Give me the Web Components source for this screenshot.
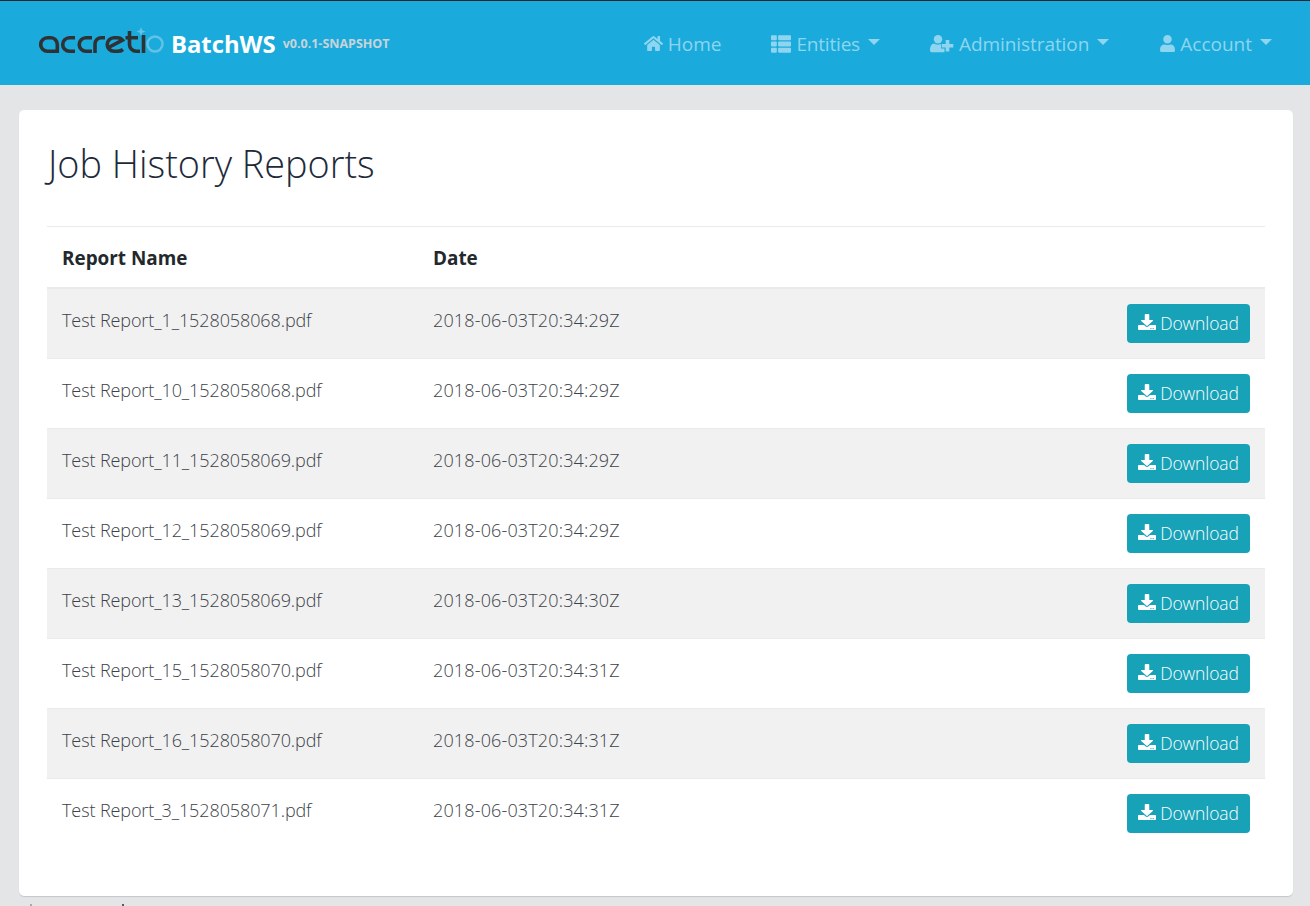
<!DOCTYPE html>
<html lang="en">
<head>
<meta charset="UTF-8">
<title>Job History Reports</title>
<style>
  html, body { margin: 0; height: 100%; overflow: hidden; }
  body { background: #e4e5e6; font-family: "Open Sans", "Noto Sans", sans-serif; }
</style>
</head>
<body>
<app-navbar></app-navbar>
<page-main>
  <report-card heading="Job History Reports">
    <report-row name="Test Report_1_1528058068.pdf" date="2018-06-03T20:34:29Z"></report-row>
    <report-row name="Test Report_10_1528058068.pdf" date="2018-06-03T20:34:29Z"></report-row>
    <report-row name="Test Report_11_1528058069.pdf" date="2018-06-03T20:34:29Z"></report-row>
    <report-row name="Test Report_12_1528058069.pdf" date="2018-06-03T20:34:29Z"></report-row>
    <report-row name="Test Report_13_1528058069.pdf" date="2018-06-03T20:34:30Z"></report-row>
    <report-row name="Test Report_15_1528058070.pdf" date="2018-06-03T20:34:31Z"></report-row>
    <report-row name="Test Report_16_1528058070.pdf" date="2018-06-03T20:34:31Z"></report-row>
    <report-row name="Test Report_3_1528058071.pdf" date="2018-06-03T20:34:31Z"></report-row>
  </report-card>
</page-main>

<script>
  const ICONS = {
    home: '<svg width="19" height="17" viewBox="0 0 576 512"><path fill="currentColor" d="M280.370 148.260L96 300.110V464a16 16 0 0 0 16 16l112.060-.29a16 16 0 0 0 15.920-16V368a16 16 0 0 1 16-16h64a16 16 0 0 1 16 16v95.640a16 16 0 0 0 16 16.050L464 480a16 16 0 0 0 16-16V300L295.670 148.260a12.190 12.190 0 0 0-15.300 0zM571.600 251.470L488 182.560V44.050a12 12 0 0 0-12-12h-56a12 12 0 0 0-12 12v72.610L318.470 43a48 48 0 0 0-61 0L4.340 251.470a12 12 0 0 0-1.600 16.900l25.500 31A12 12 0 0 0 45.150 301l235.220-193.740a12.190 12.190 0 0 1 15.300 0L530.900 301a12 12 0 0 0 16.900-1.600l25.500-31a12 12 0 0 0-1.700-16.930z"/></svg>',
    table: '<svg width="20" height="20" viewBox="0 0 512 512"><path fill="currentColor" d="M149.333 216v80c0 13.255-10.745 24-24 24H24c-13.255 0-24-10.745-24-24v-80c0-13.255 10.745-24 24-24h101.333c13.255 0 24 10.745 24 24zM0 376v80c0 13.255 10.745 24 24 24h101.333c13.255 0 24-10.745 24-24v-80c0-13.255-10.745-24-24-24H24c-13.255 0-24 10.745-24 24zM125.333 32H24C10.745 32 0 42.745 0 56v80c0 13.255 10.745 24 24 24h101.333c13.255 0 24-10.745 24-24V56c0-13.255-10.745-24-24-24zm80 448H488c13.255 0 24-10.745 24-24v-80c0-13.255-10.745-24-24-24H205.333c-13.255 0-24 10.745-24 24v80c0 13.255 10.745 24 24 24zm-24-424v80c0 13.255 10.745 24 24 24H488c13.255 0 24-10.745 24-24V56c0-13.255-10.745-24-24-24H205.333c-13.255 0-24 10.745-24 24zm24 264H488c13.255 0 24-10.745 24-24v-80c0-13.255-10.745-24-24-24H205.333c-13.255 0-24 10.745-24 24v80c0 13.255 10.745 24 24 24z"/></svg>',
    userPlus: '<svg width="24" height="18" viewBox="0 0 24 18"><circle cx="8" cy="4.300" r="4.200" fill="currentColor"/><path fill="currentColor" d="M0 15.200C0 11.300 1.500 8.800 4 8.500 5 9.200 6.500 9.700 8 9.700s2.400-.2 3-.6v4.400h3.500v3.800H1.800C.7 17.300 0 16.400 0 15.200z"/><path fill="currentColor" d="M15.700 5h3.600v3.900h4v3.600h-4v3.900h-3.600v-3.900h-4V8.900h4z"/></svg>',
    user: '<svg width="15" height="17" viewBox="0 0 448 512"><path fill="currentColor" d="M224 256c70.700 0 128-57.300 128-128S294.700 0 224 0 96 57.300 96 128s57.300 128 128 128zm89.600 32h-16.700c-22.200 10.200-46.900 16-72.900 16s-50.600-5.800-72.900-16h-16.700C60.200 288 0 348.200 0 422.400V464c0 26.500 21.500 48 48 48h352c26.500 0 48-21.500 48-48v-41.600c0-74.200-60.200-134.400-134.400-134.400z"/></svg>',
    download: '<svg width="18" height="16" viewBox="0 0 512 512" preserveAspectRatio="none"><path fill="currentColor" d="M216 0h80c13.300 0 24 10.700 24 24v168h87.700c17.800 0 26.700 21.500 14.100 34.100L269.700 378.300c-7.500 7.500-19.800 7.500-27.300 0L90.100 226.100c-12.600-12.600-3.700-34.100 14.100-34.100H192V24c0-13.300 10.700-24 24-24zm296 376v112c0 13.300-10.700 24-24 24H24c-13.300 0-24-10.700-24-24V376c0-13.300 10.700-24 24-24h146.700l49 49c20.100 20.100 52.500 20.100 72.600 0l49-49H488c13.300 0 24 10.700 24 24zm-124 88c0-11-9-20-20-20s-20 9-20 20 9 20 20 20 20-9 20-20zm64 0c0-11-9-20-20-20s-20 9-20 20 9 20 20 20 20-9 20-20z"/></svg>'
  };

  class AppNavbar extends HTMLElement {
    constructor() {
      super();
      this.attachShadow({ mode: 'open' });
      this.shadowRoot.innerHTML = `
        <style>
          :host { display: flex; align-items: center; box-sizing: border-box; border-top: 1px solid #20262d; background: #1aabdc; padding: 0 39px; height: 85px; }
          svg.mark { display: block; flex: none; }
          .brand { font-weight: 700; color: #fff; font-size: 23.800px; margin-left: 6px; padding-top: 1px; }
          .ver { font-weight: 700; color: #c9d3d8; font-size: 12.500px; margin-left: 7px; }
          nav { margin-left: auto; display: flex; align-items: center; gap: 50px; margin-right: -1px; padding-top: 1px; }
        </style>
        <svg class="mark" width="126" height="32" viewBox="0 0 126 32">
          <g fill="none" stroke="#2f3235" stroke-width="3.600">
            <path d="M8.500 10.700h3.500a6.300 6.800 0 0 1 6.300 6.800v6.800H8.500a6.800 6.800 0 0 1 0-13.600z"/>
            <path d="M36 10.700h-5.500a6.800 6.800 0 0 0 0 13.600H36"/>
            <path d="M53 10.700h-6a6.800 6.800 0 0 0 0 13.600h6"/>
            <path d="M56 26V17a6.300 6.300 0 0 1 6.300-6.300H66"/>
            <path d="M84 22.500c-1.500 1.200-3.500 1.800-5.500 1.800H75a6.800 6.800 0 0 1 0-13.600h3.500c2 0 3.800 1 5 2.500L69.500 20.500"/>
            <path d="M90.500 4v13.500a6.800 6.800 0 0 0 6.800 6.800H101M86.500 10.700H99"/>
            <path d="M104.500 8v18"/>
          </g>
          <circle cx="116" cy="17" r="7.500" fill="none" stroke="#63c3e6" stroke-width="2.500"/>
          <path d="M102 0l1.200 3.300 3.300 1.200-3.300 1.200L102 9l-1.200-3.300-3.300-1.200 3.300-1.200z" fill="#63c3e6"/>
        </svg>
        <span class="brand">BatchWS</span>
        <span class="ver">v0.0.1-SNAPSHOT</span>
        <nav>
          <nav-link icon="home" label="Home"></nav-link>
          <nav-link icon="table" label="Entities" caret style="letter-spacing:-0.2px"></nav-link>
          <nav-link icon="userPlus" label="Administration" caret style="letter-spacing:-0.07px"></nav-link>
          <nav-link icon="user" label="Account" caret style="margin-left:1px"></nav-link>
        </nav>`;
    }
  }

  class NavLink extends HTMLElement {
    connectedCallback() {
      const root = this.attachShadow({ mode: 'open' });
      const caret = this.hasAttribute('caret') ? '<i></i>' : '';
      root.innerHTML = `
        <style>
          :host { display: flex; align-items: center; color: #8fd5ef; font-size: 19px; line-height: 24px; }
          svg { display: block; margin-right: 5px; }
          i { width: 0; height: 0; margin-left: 8px; margin-top: -3px; border: 6px solid transparent; border-bottom: 0; border-top-color: currentColor; }
        </style>
        ${ICONS[this.getAttribute('icon')]}<span>${this.getAttribute('label')}</span>${caret}`;
    }
  }

  class PageMain extends HTMLElement {
    constructor() {
      super();
      this.attachShadow({ mode: 'open' });
      this.shadowRoot.innerHTML = `
        <style>
          :host { display: block; padding: 25px 17px 0 19px; }
          .peek { display: flex; height: 2px; margin-top: 8px; padding-left: 11px; gap: 90px; }
          .peek b { width: 2px; background: #a8abae; }
          .peek b + b { background: #5a5d60; }
        </style>
        <slot></slot>
        <div class="peek"><b></b><b></b></div>`;
    }
  }

  class ReportCard extends HTMLElement {
    connectedCallback() {
      const root = this.attachShadow({ mode: 'open' });
      root.innerHTML = `
        <style>
          :host { display: block; box-sizing: border-box; height: 786px; background: #fff; border-radius: 5px; box-shadow: 0 1px 1px #c4c6c8; padding: 28px 28px 0; color: #23282c; }
          h2 { margin: 0; padding-left: 1px; font-weight: 300; font-size: 37.800px; line-height: 52px; height: 88px; color: #1e2a3a; }
          .head { display: grid; grid-template-columns: 371px 1fr; height: 63px; align-items: center; padding: 2px 15px 0; border-top: 1px solid #e8ebee; border-bottom: 2px solid #e8ebee; box-sizing: border-box; font-weight: 700; font-size: 18.900px; }
        </style>
        <h2>${this.getAttribute('heading')}</h2>
        <div class="head"><span>Report Name</span><span>Date</span></div>
        <slot></slot>`;
    }
  }

  class ReportRow extends HTMLElement {
    connectedCallback() {
      const root = this.attachShadow({ mode: 'open' });
      root.innerHTML = `
        <style>
          :host { display: grid; grid-template-columns: 371px 1fr auto; height: 70px; box-sizing: border-box; padding: 15px 15px 0; border-bottom: 1px solid #e8ebee; font-weight: 300; font-size: 18px; color: #3c4248; line-height: 33px; }
          :host(:nth-of-type(odd)) { background: #f1f1f1; }
          :host(:last-of-type) { border-bottom: 0; }
          span { white-space: nowrap; }
          .name { letter-spacing: -0.1px; }
          .date { letter-spacing: 0.15px; }
          button { display: flex; align-items: center; gap: 4px; height: 39px; width: 123px; box-sizing: border-box; justify-content: center; background: #17a2b8; color: #fff; border: 0; border-radius: 4px; font: inherit; font-size: 17.500px; font-weight: 350; letter-spacing: -0.1px; padding: 0; }
          svg { display: block; margin-top: -3px; }
        </style>
        <span class="name">${this.getAttribute('name')}</span>
        <span class="date">${this.getAttribute('date')}</span>
        <button>${ICONS.download}<span>Download</span></button>`;
    }
  }

  customElements.define('app-navbar', AppNavbar);
  customElements.define('nav-link', NavLink);
  customElements.define('page-main', PageMain);
  customElements.define('report-card', ReportCard);
  customElements.define('report-row', ReportRow);
</script>
</body>
</html>
